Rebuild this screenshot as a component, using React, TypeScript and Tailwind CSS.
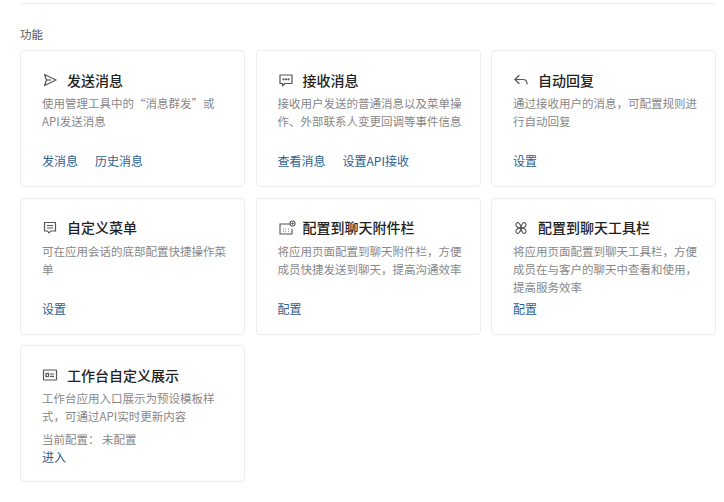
import type { ReactNode } from 'react'

const font = { fontFamily: '"Noto Sans CJK SC", "Noto Sans", sans-serif' }

// ── Icons ─────────────────────────────────────────────────────────────────────
const SendIcon = () => (
  <svg width="16" height="16" viewBox="0 0 16 16" fill="none" stroke="#555" strokeWidth="1.2" strokeLinejoin="round">
    <path d="M2.5 2.5 L14 8 L2.5 13.5 L4.5 8 Z" /><path d="M4.5 8 H9" />
  </svg>
)
const ChatIcon = () => (
  <svg width="16" height="16" viewBox="0 0 16 16" fill="none" stroke="#555" strokeWidth="1.2" strokeLinejoin="round">
    <path d="M2 3 H14 V11.5 H7 L4.5 13.8 V11.5 H2 Z" />
    <circle cx="5.5" cy="7.3" r="0.5" fill="#555" /><circle cx="8" cy="7.3" r="0.5" fill="#555" /><circle cx="10.5" cy="7.3" r="0.5" fill="#555" />
  </svg>
)
const ReplyIcon = () => (
  <svg width="16" height="16" viewBox="0 0 16 16" fill="none" stroke="#555" strokeWidth="1.2" strokeLinejoin="round" strokeLinecap="round">
    <path d="M6 3.5 L2 7.5 L6 11.5" /><path d="M2 7.5 H10 C12.5 7.5 14 9 14 12" />
  </svg>
)
const MenuIcon = () => (
  <svg width="16" height="16" viewBox="0 0 16 16" fill="none" stroke="#555" strokeWidth="1.2" strokeLinejoin="round">
    <path d="M2.5 2.5 H13.5 V11 H8.5 L7 13 L5.5 11 H2.5 Z" /><path d="M5 5.5 H11 M5 8 H11" />
  </svg>
)
const AttachIcon = () => (
  <svg width="18" height="16" viewBox="0 0 18 16" fill="none" stroke="#555" strokeWidth="1.1">
    <path d="M12 4 H2 V14 H14 V9" />
    <path d="M5 9 h0.5 M7.5 9 h0.5 M10 9 h0.5 M5 11.5 h0.5 M7.5 11.5 h0.5 M10 11.5 h0.5" strokeWidth="1.4" />
    <circle cx="14.5" cy="3.5" r="2.5" /><path d="M14.5 2.3 V4.7 M13.3 3.5 H15.7" strokeWidth="0.9" />
  </svg>
)
const ToolIcon = () => (
  <svg width="16" height="16" viewBox="0 0 16 16" fill="none" stroke="#555" strokeWidth="1.1">
    <path d="M8 8 C5 8 2.5 6.5 3 4 C3.3 2.5 5 2.3 6 3.2 C7.3 4.4 8 6 8 8 Z" />
    <path d="M8 8 C11 8 13.5 6.5 13 4 C12.7 2.5 11 2.3 10 3.2 C8.7 4.4 8 6 8 8 Z" />
    <path d="M8 8 C5 8 2.5 9.5 3 12 C3.3 13.5 5 13.7 6 12.8 C7.3 11.6 8 10 8 8 Z" />
    <path d="M8 8 C11 8 13.5 9.5 13 12 C12.7 13.5 11 13.7 10 12.8 C8.7 11.6 8 10 8 8 Z" />
  </svg>
)
const BoardIcon = () => (
  <svg width="16" height="16" viewBox="0 0 16 16" fill="none" stroke="#555" strokeWidth="1.2">
    <rect x="1.5" y="3" width="13" height="10" rx="0.5" />
    <rect x="4" y="6.5" width="2.5" height="3" /><path d="M8 7 H12 M8 9.3 H12" />
  </svg>
)

// ── Card ──────────────────────────────────────────────────────────────────────
function Card({ icon, title, desc, links, extra }: {
  icon: ReactNode; title: string; desc: string; links: string[]; extra?: string
}) {
  return (
    <div className="flex flex-col h-[137px] rounded border border-[#ececec] bg-white pl-[21px] pr-[18px] pt-[19px] pb-[16px]">
      <div className="flex items-center gap-[7px] h-[20px]">
        <span className="w-[18px] flex items-center">{icon}</span>
        <span className="text-[14px] font-medium text-[#222]">{title}</span>
      </div>
      <p className="mt-[4px] text-[11.5px] leading-[18px] text-[#888]">{desc}</p>
      {extra && <p className="mt-[5px] text-[11.5px] leading-[18px] text-[#888]">{extra}</p>}
      <div className="mt-auto flex gap-[17px] text-[12px] leading-[18px] text-[#2d5f8f]">
        {links.map(l => <span key={l}>{l}</span>)}
      </div>
    </div>
  )
}

export default function App() {
  return (
    <div className="w-[724px] h-[502px] bg-white pl-[20px] pr-[8px]" style={font}>
      <div className="h-[4px] border-b border-[#eeeeee]" />
      <div className="pt-[22px] pb-[8px] text-[11.5px] leading-[16px] text-[#555]">功能</div>
      <div className="grid grid-cols-[225px_225px_225px] gap-x-[10.5px] gap-y-[10.5px]">
        <Card icon={<SendIcon />} title="发送消息" desc="使用管理工具中的“消息群发”或API发送消息" links={['发消息', '历史消息']} />
        <Card icon={<ChatIcon />} title="接收消息" desc="接收用户发送的普通消息以及菜单操作、外部联系人变更回调等事件信息" links={['查看消息', '设置API接收']} />
        <Card icon={<ReplyIcon />} title="自动回复" desc="通过接收用户的消息，可配置规则进行自动回复" links={['设置']} />
        <Card icon={<MenuIcon />} title="自定义菜单" desc="可在应用会话的底部配置快捷操作菜单" links={['设置']} />
        <Card icon={<AttachIcon />} title="配置到聊天附件栏" desc="将应用页面配置到聊天附件栏，方便成员快捷发送到聊天，提高沟通效率" links={['配置']} />
        <Card icon={<ToolIcon />} title="配置到聊天工具栏" desc="将应用页面配置到聊天工具栏，方便成员在与客户的聊天中查看和使用，提高服务效率" links={['配置']} />
        <Card icon={<BoardIcon />} title="工作台自定义展示" desc="工作台应用入口展示为预设模板样式，可通过API实时更新内容" extra="当前配置：  未配置" links={['进入']} />
      </div>
    </div>
  )
}
